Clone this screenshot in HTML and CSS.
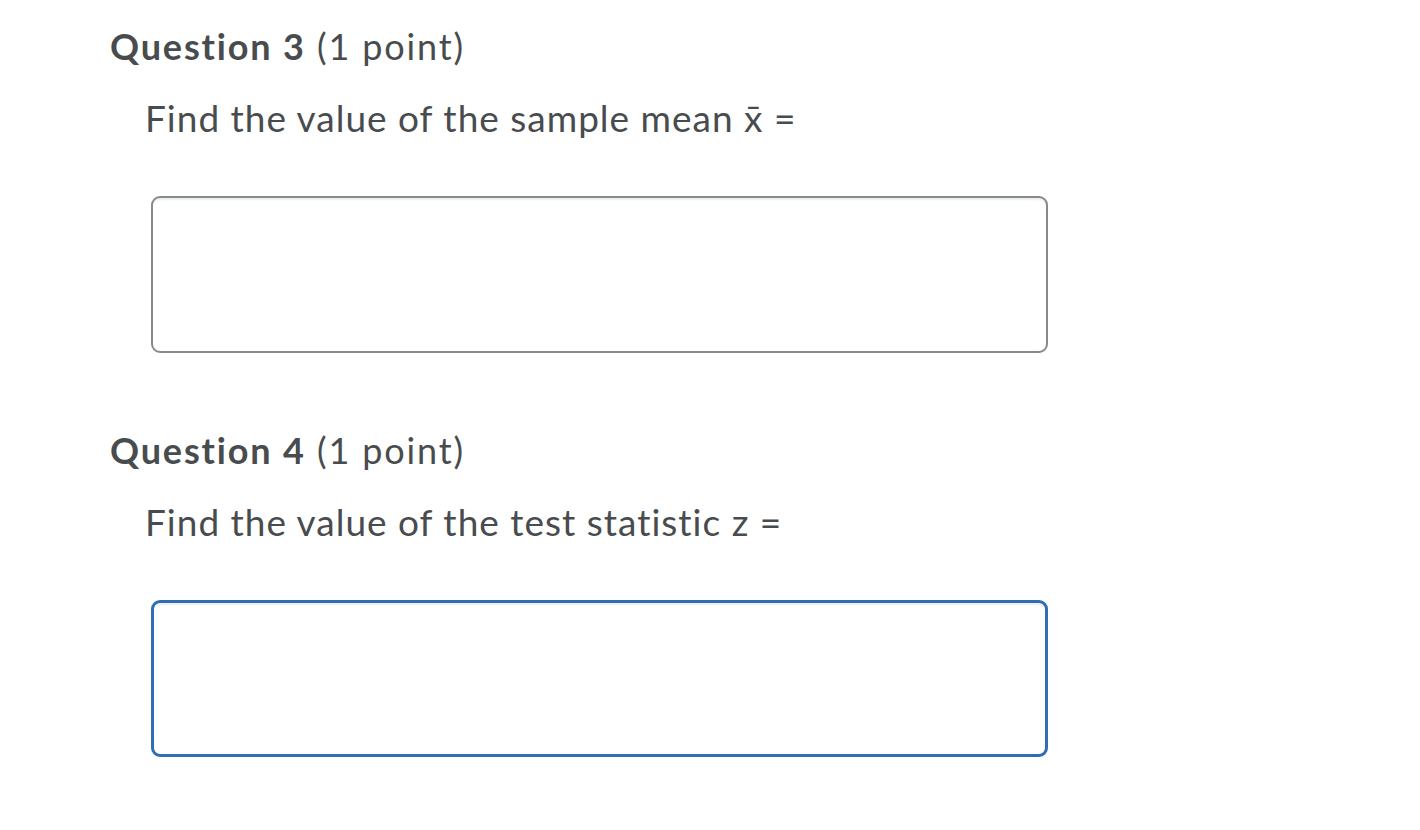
FILE: index.html
```html
<!DOCTYPE html>
<html>
<head>
<meta charset="utf-8">
<link rel="stylesheet" href="styles.css">
</head>
<body>
<div class="page">
  <section class="question">
    <h2 class="q-title"><strong>Question 3</strong> <span class="pts">(1 point)</span></h2>
    <p class="q-text">Find the value of the sample mean x̄ =</p>
    <div class="answer"></div>
  </section>
  <section class="question">
    <h2 class="q-title"><strong>Question 4</strong> <span class="pts">(1 point)</span></h2>
    <p class="q-text">Find the value of the test statistic z =</p>
    <div class="answer focused"></div>
  </section>
</div>
</body>
</html>
```
FILE: styles.css
```css
html, body {
  margin: 0;
  padding: 0;
  background: #ffffff;
}
body {
  font-family: Lato, "Liberation Sans", sans-serif;
  color: #494c4e;
  font-variant-ligatures: none;
}
.page {
  padding: 24px 0 0 110px;
  width: 940px;
}
.question {
  height: 404px;
}
.q-title {
  margin: 0;
  font-size: 36px;
  line-height: 44px;
  font-weight: 400;
  letter-spacing: 1.85px;
}
.q-title strong {
  font-weight: 700;
}
.q-text {
  margin: 28px 0 0 35px;
  font-size: 37px;
  line-height: 44px;
  letter-spacing: 1px;
}
.answer {
  margin: 56px 0 0 41px;
  box-sizing: border-box;
  width: 897px;
  height: 157px;
  border: 2px solid #878a8c;
  border-radius: 9px;
  box-shadow: inset 0 3px 2px -1px #eceeef;
  background: #fff;
}
.answer.focused {
  border: 3px solid #2f6db5;
}
```
